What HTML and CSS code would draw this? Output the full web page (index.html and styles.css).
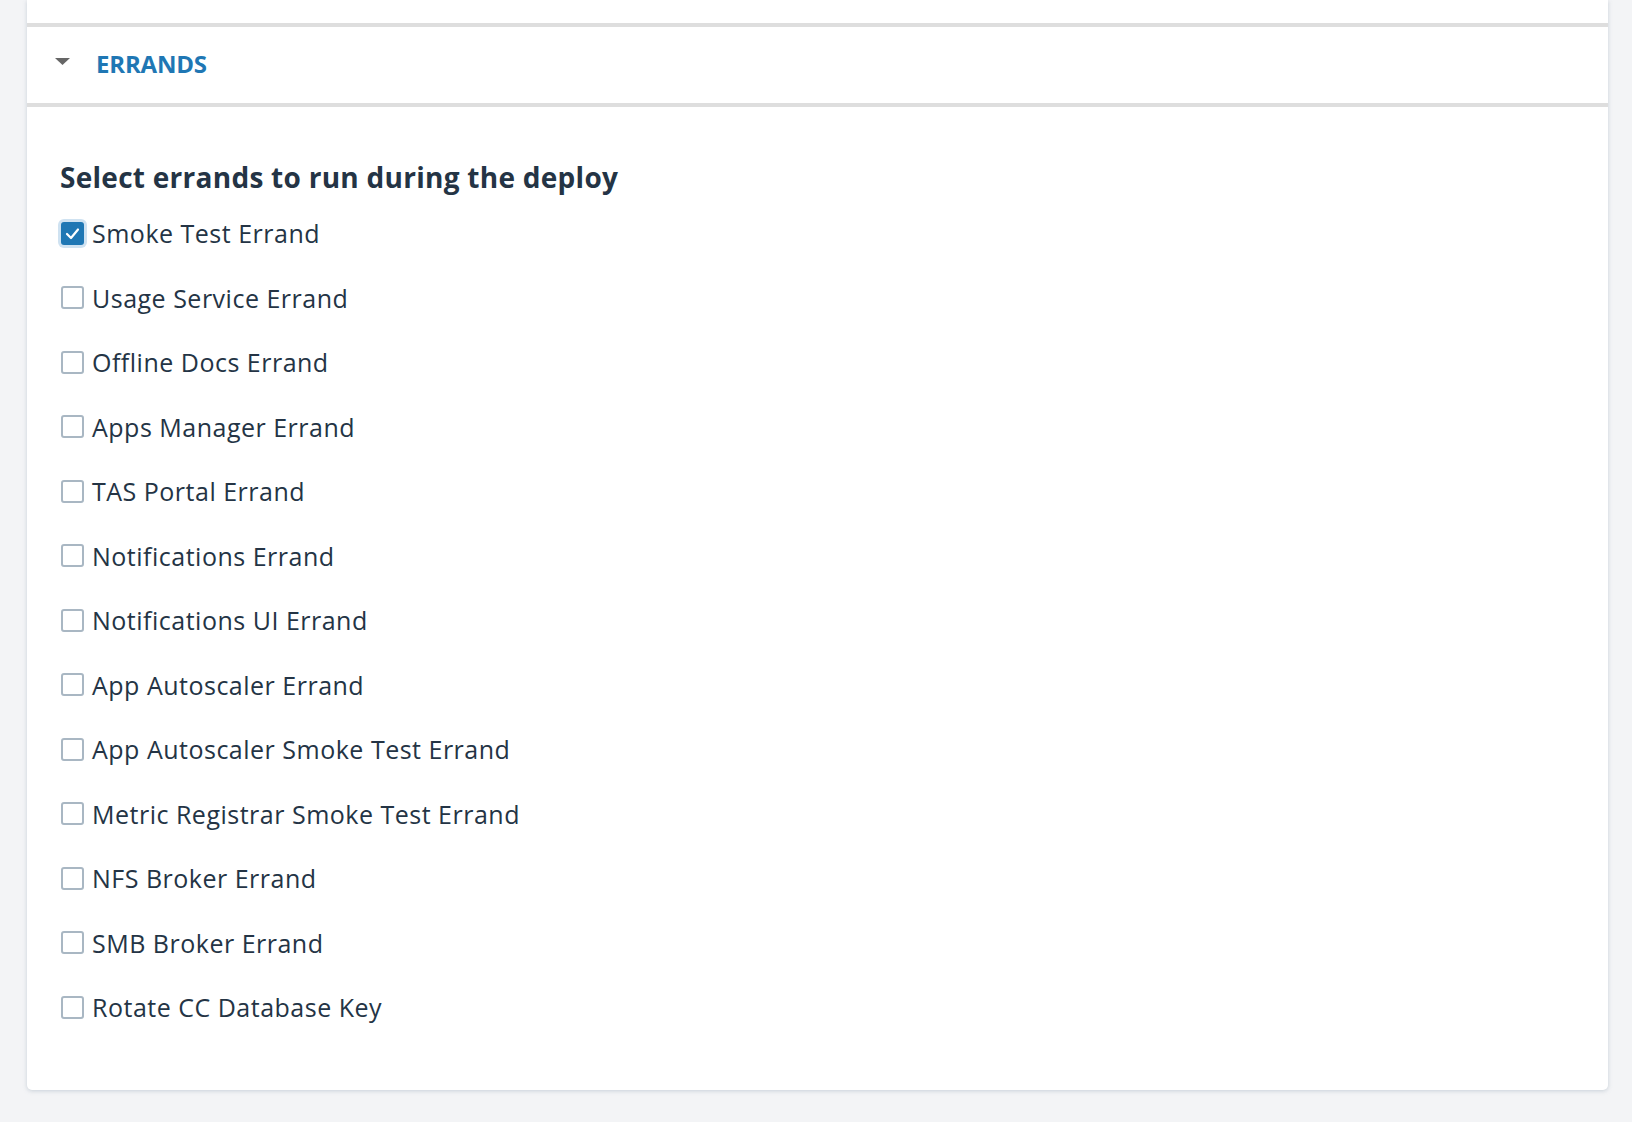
FILE: index.html
```html
<!DOCTYPE html>
<html lang="en">
<head>
<meta charset="utf-8">
<title>Errands</title>
<link rel="stylesheet" href="styles.css">
</head>
<body>
<div class="page">
  <div class="card">
    <div class="prev-section"></div>
    <div class="divider"></div>
    <div class="section-header">
      <svg class="caret" width="15" height="7" viewBox="0 0 15 7"><polygon points="0,0 15,0 7.5,7" fill="#666"/></svg>
      <span class="section-title">ERRANDS</span>
    </div>
    <div class="divider"></div>
    <div class="section-body">
      <h2 class="body-title">Select errands to run during the deploy</h2>
      <ul class="errand-list">
        <li class="errand"><span class="box checked"><svg width="23" height="23" viewBox="0 0 23 23"><polyline points="6,12 10,16 17,7.5" fill="none" stroke="#fff" stroke-width="2.2" stroke-linecap="round" stroke-linejoin="round"/></svg></span><span class="label">Smoke Test Errand</span></li>
        <li class="errand"><span class="box"></span><span class="label">Usage Service Errand</span></li>
        <li class="errand"><span class="box"></span><span class="label">Offline Docs Errand</span></li>
        <li class="errand"><span class="box"></span><span class="label">Apps Manager Errand</span></li>
        <li class="errand"><span class="box"></span><span class="label">TAS Portal Errand</span></li>
        <li class="errand"><span class="box"></span><span class="label">Notifications Errand</span></li>
        <li class="errand"><span class="box"></span><span class="label">Notifications UI Errand</span></li>
        <li class="errand"><span class="box"></span><span class="label">App Autoscaler Errand</span></li>
        <li class="errand"><span class="box"></span><span class="label">App Autoscaler Smoke Test Errand</span></li>
        <li class="errand"><span class="box"></span><span class="label">Metric Registrar Smoke Test Errand</span></li>
        <li class="errand"><span class="box"></span><span class="label">NFS Broker Errand</span></li>
        <li class="errand"><span class="box"></span><span class="label">SMB Broker Errand</span></li>
        <li class="errand"><span class="box"></span><span class="label">Rotate CC Database Key</span></li>
      </ul>
    </div>
  </div>
</div>
</body>
</html>
```

FILE: styles.css
```css
* { box-sizing: border-box; }
html, body {
  margin: 0;
  padding: 0;
  background: #f3f4f6;
}
body {
  font-family: "Open Sans", "Noto Sans", sans-serif;
  color: #243445;
}
.page {
  padding: 0 24px 0 27px;
  height: 1122px;
  overflow: hidden;
}
.card {
  background: #fff;
  border-radius: 0 0 5px 5px;
  box-shadow: 0 1px 4px rgba(120, 140, 160, 0.35);
}
.prev-section {
  height: 23px;
}
.divider {
  height: 4px;
  background: #dedede;
}
.section-header {
  height: 76px;
  display: flex;
  align-items: center;
  padding-left: 28px;
  padding-bottom: 4px;
}
.caret {
  display: block;
  margin-top: -4px;
}
.section-title {
  margin-left: 26px;
  font-size: 24px;
  font-weight: 700;
  color: #1f77b4;
  letter-spacing: -0.2px;
}
.section-body {
  padding: 52px 32px 50px 32px;
}
.body-title {
  margin: 0 0 6px 1px;
  font-size: 28px;
  line-height: 36px;
  font-weight: 700;
  letter-spacing: 0.27px;
}
.errand-list {
  list-style: none;
  margin: 0;
  padding: 0;
}
.errand {
  height: 64.5px;
  display: flex;
  align-items: center;
}
.box {
  width: 23px;
  height: 23px;
  margin-left: 2px;
  border: 2px solid #a9b7c3;
  border-radius: 3px;
  background: #fff;
  flex: none;
  display: flex;
  align-items: center;
  justify-content: center;
}
.box.checked {
  border: none;
  background: #1f77b4;
  box-shadow: 0 0 0 3px #cfe2f1;
}
.label {
  margin-left: 8px;
  font-size: 25px;
  line-height: 32px;
  letter-spacing: 0.5px;
}
```
